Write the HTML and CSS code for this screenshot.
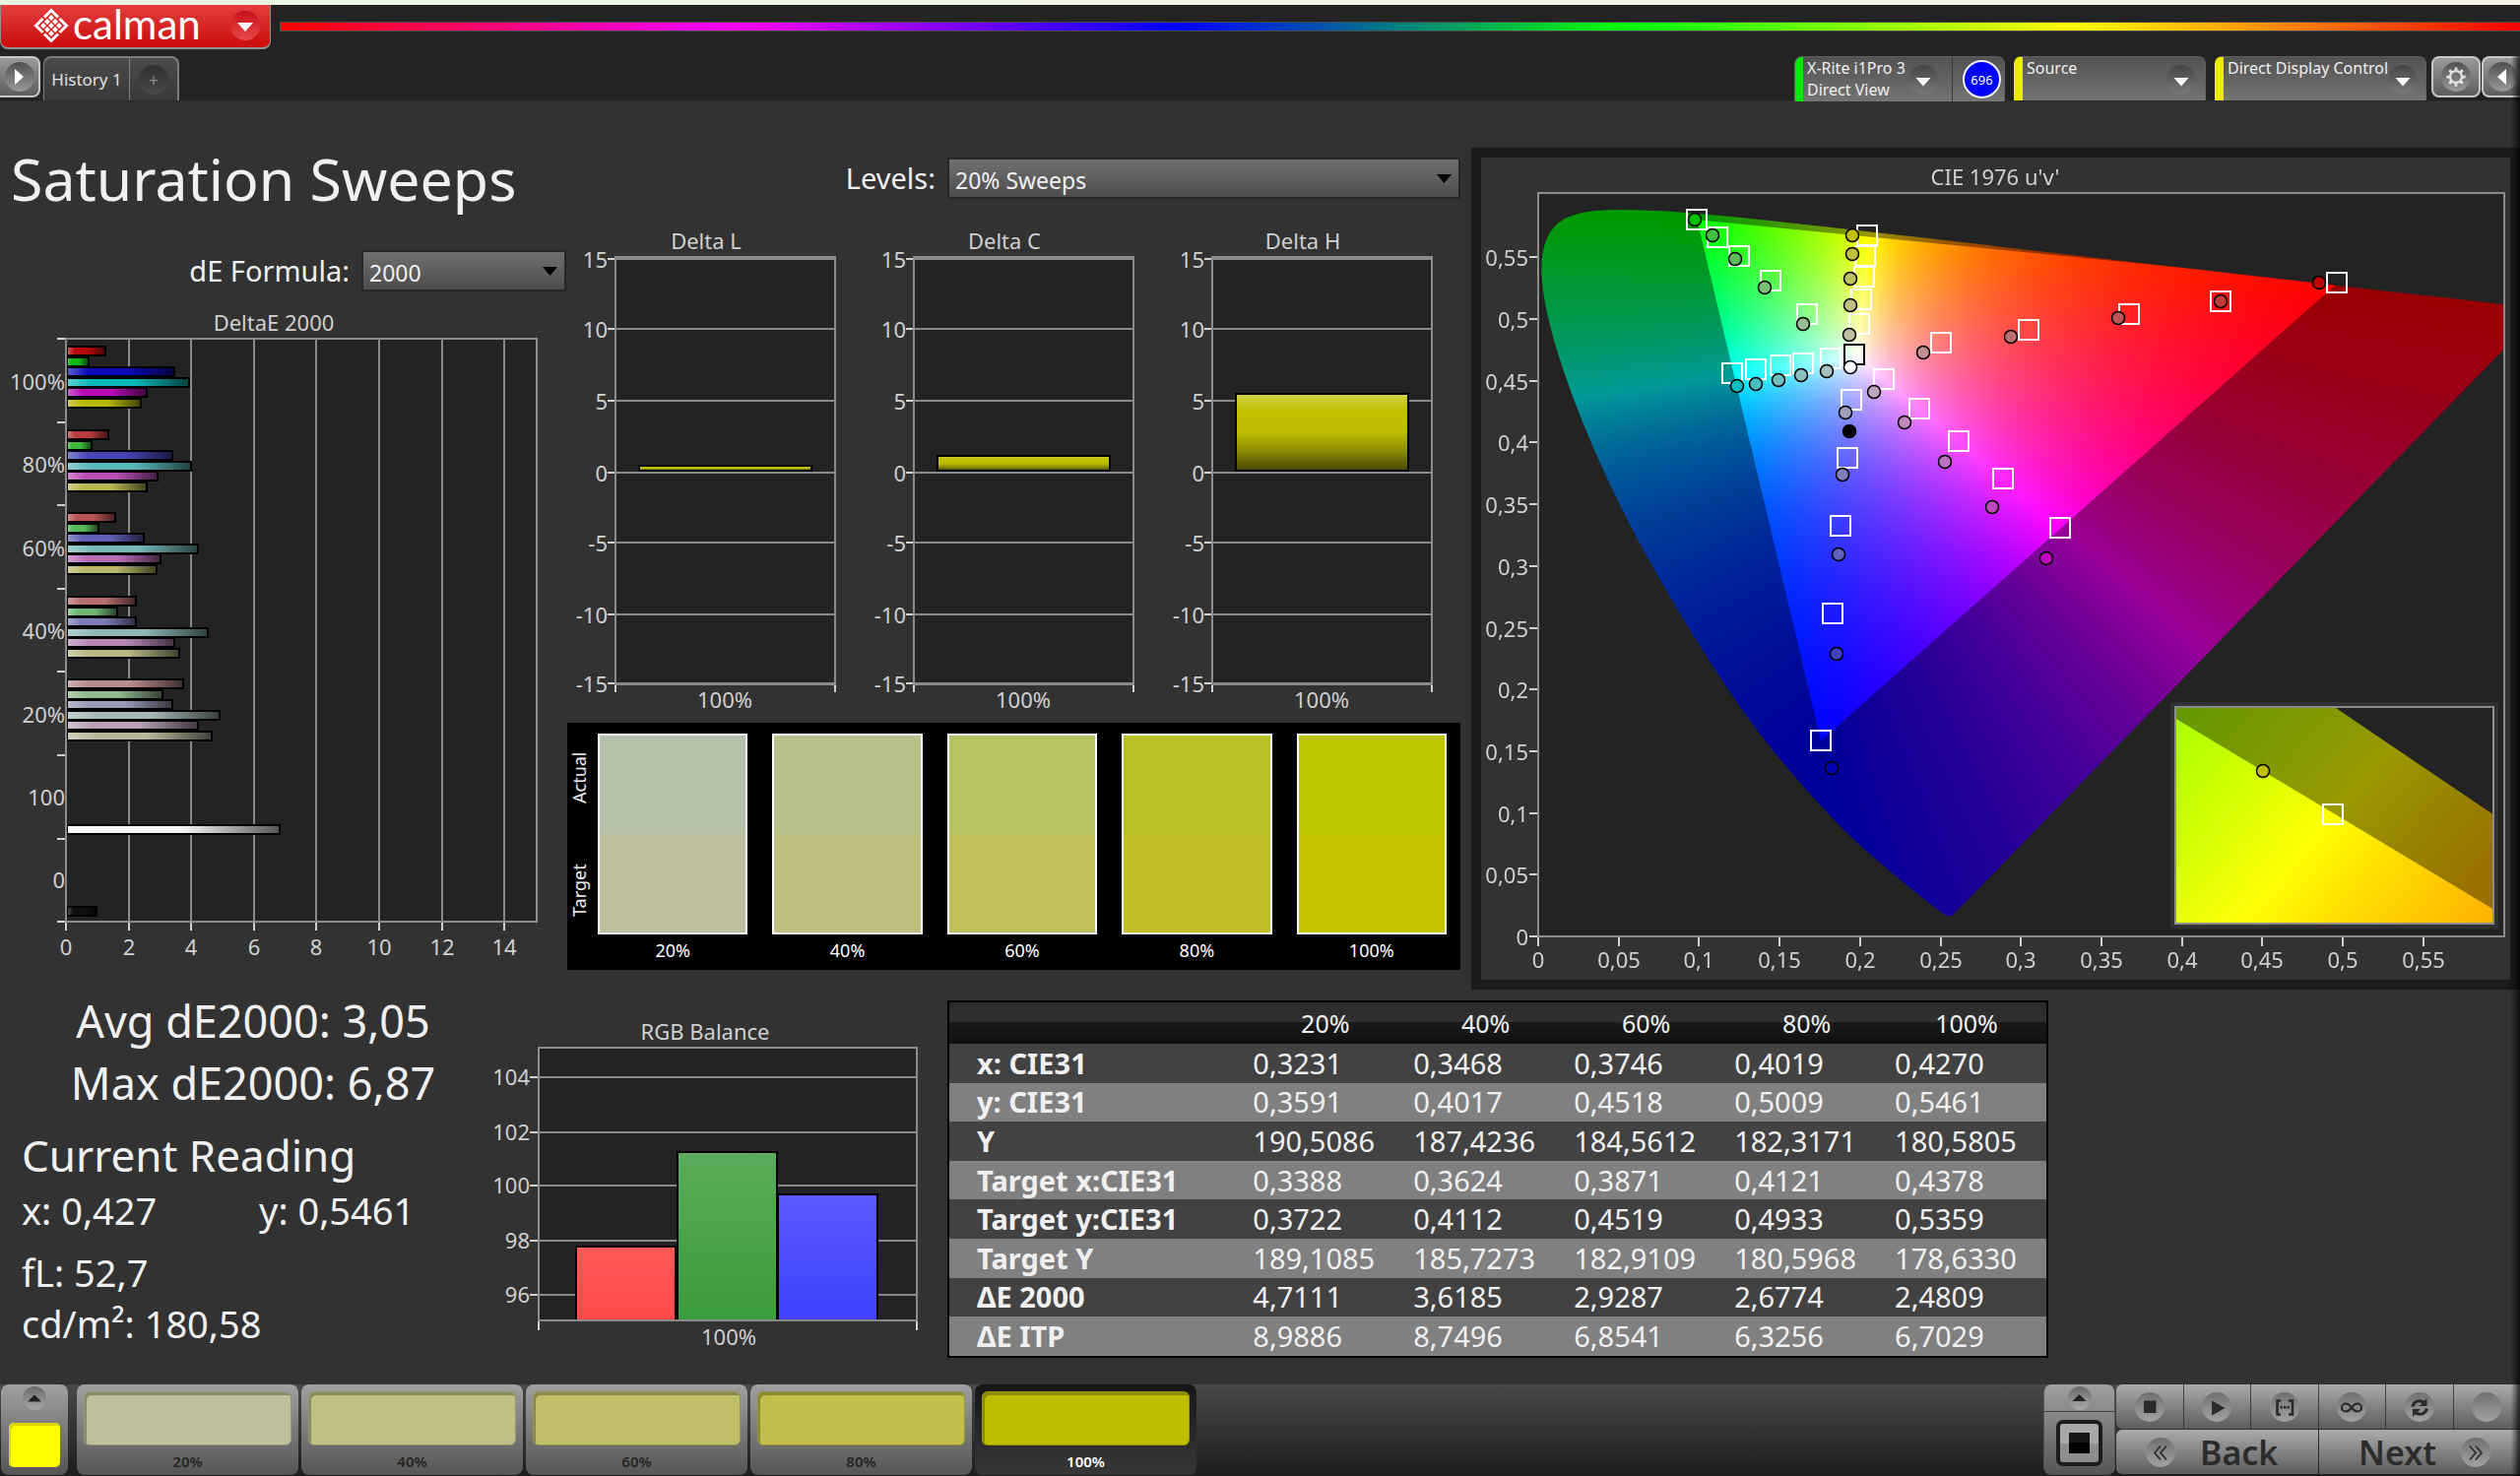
FILE: index.html
```html
<!DOCTYPE html>
<html lang="en">
<head>
<meta charset="utf-8">
<title>Calman - Saturation Sweeps</title>
<link rel="stylesheet" href="styles.css">
</head>
<body>
<header class="header">
  <div class="brand-row">
    <button class="brand" type="button">
      <svg class="brand-mark" viewBox="0 0 36 36" aria-hidden="true">
        <g fill="none" stroke="#fff" stroke-width="3">
          <path d="M11 9.500L18 2.500L25 9.500M26.500 11L33.500 18L26.500 25M25 26.500L18 33.500L11 26.500M9.500 25L2.500 18L9.500 11"/>
        </g>
        <g fill="#fff">
          <path d="M18 7l3 3-3 3-3-3zM14 11l3 3-3 3-3-3zM22 11l3 3-3 3-3-3zM10 15l3 3-3 3-3-3zM18 15l3 3-3 3-3-3zM26 15l3 3-3 3-3-3zM14 19l3 3-3 3-3-3zM22 19l3 3-3 3-3-3zM18 23l3 3-3 3-3-3z"/>
        </g>
      </svg>
      <span class="brand-name">calman</span>
      <span class="disc disc-red"><span class="tri-down"></span></span>
    </button>
    <div class="rainbow"></div>
  </div>
  <div class="tab-row">
    <button class="square-btn square-left" type="button" aria-label="Expand"><span class="disc"><span class="tri-right"></span></span></button>
    <div class="history">
      <button class="history-tab" type="button">History 1</button>
      <button class="history-add" type="button" aria-label="Add"><span class="disc disc-dark">+</span></button>
    </div>
    <div class="devices">
      <div class="device-group">
        <button class="device green" type="button"><span class="device-text">X-Rite i1Pro 3<br>Direct View</span><span class="disc disc-mid"><span class="tri-down"></span></span></button>
        <span class="counter"><span class="counter-disc">696</span></span>
      </div>
      <button class="device yellow source" type="button"><span class="device-text">Source</span><span class="disc disc-mid"><span class="tri-down"></span></span></button>
      <button class="device yellow display" type="button"><span class="device-text">Direct Display Control</span><span class="disc disc-mid"><span class="tri-down"></span></span></button>
      <button class="square-btn gear" type="button" aria-label="Settings"><span class="disc">
        <svg viewBox="0 0 24 24" width="22" height="22" aria-hidden="true"><circle cx="12" cy="12" r="6.500" fill="none" stroke="#e4e4e4" stroke-width="2.500"/><g stroke="#e4e4e4" stroke-width="3"><path d="M12 1.500v4M12 18.500v4M1.500 12h4M18.500 12h4M4.600 4.600l2.800 2.800M16.600 16.600l2.800 2.800M4.600 19.400l2.800-2.800M16.600 7.400l2.800-2.800"/></g></svg>
      </span></button>
      <button class="square-btn square-right" type="button" aria-label="Collapse"><span class="disc"><span class="tri-left"></span></span></button>
    </div>
  </div>
</header>

<main class="main">
  <section class="upper">
    <div class="col-error">
      <h1>Saturation Sweeps</h1>
      <div class="field formula">
        <label for="formula">dE Formula:</label>
        <span class="select"><select id="formula"><option>2000</option></select></span>
      </div>
      <svg class="chart" id="delta-e" viewBox="0 0 576 689"></svg>
    </div>
    <div class="col-delta">
      <div class="field levels">
        <label for="levels">Levels:</label>
        <span class="select"><select id="levels"><option>20% Sweeps</option></select></span>
      </div>
      <svg class="chart" id="delta-lch" viewBox="0 0 907 532"></svg>
      <div class="swatches">
        <div class="swatch-axis"><span>Actual</span><span>Target</span></div>
        <figure class="swatch s20"><div class="patch"></div><figcaption>20%</figcaption></figure>
        <figure class="swatch s40"><div class="patch"></div><figcaption>40%</figcaption></figure>
        <figure class="swatch s60"><div class="patch"></div><figcaption>60%</figcaption></figure>
        <figure class="swatch s80"><div class="patch"></div><figcaption>80%</figcaption></figure>
        <figure class="swatch s100"><div class="patch"></div><figcaption>100%</figcaption></figure>
      </div>
    </div>
    <div class="cie">
      <canvas id="cie-fill" width="1045" height="835"></canvas>
      <svg id="cie-plot" viewBox="0 0 1045 835"></svg>
    </div>
  </section>

  <section class="lower">
    <div class="readings">
      <div class="summary">
        <p>Avg dE2000: 3,05</p>
        <p>Max dE2000: 6,87</p>
      </div>
      <h2>Current Reading</h2>
      <div class="reading xy"><span>x: 0,427</span><span>y: 0,5461</span></div>
      <div class="reading fl">fL: 52,7</div>
      <div class="reading">cd/m²: 180,58</div>
    </div>
    <svg class="chart" id="rgb" viewBox="0 0 448 372"></svg>
    <table class="data">
      <thead><tr><th></th><th>20%</th><th>40%</th><th>60%</th><th>80%</th><th>100%</th></tr></thead>
      <tbody>
        <tr><th>x: CIE31</th><td>0,3231</td><td>0,3468</td><td>0,3746</td><td>0,4019</td><td>0,4270</td></tr>
        <tr><th>y: CIE31</th><td>0,3591</td><td>0,4017</td><td>0,4518</td><td>0,5009</td><td>0,5461</td></tr>
        <tr><th>Y</th><td>190,5086</td><td>187,4236</td><td>184,5612</td><td>182,3171</td><td>180,5805</td></tr>
        <tr><th>Target x:CIE31</th><td>0,3388</td><td>0,3624</td><td>0,3871</td><td>0,4121</td><td>0,4378</td></tr>
        <tr><th>Target y:CIE31</th><td>0,3722</td><td>0,4112</td><td>0,4519</td><td>0,4933</td><td>0,5359</td></tr>
        <tr><th>Target Y</th><td>189,1085</td><td>185,7273</td><td>182,9109</td><td>180,5968</td><td>178,6330</td></tr>
        <tr><th>ΔE 2000</th><td>4,7111</td><td>3,6185</td><td>2,9287</td><td>2,6774</td><td>2,4809</td></tr>
        <tr><th>ΔE ITP</th><td>8,9886</td><td>8,7496</td><td>6,8541</td><td>6,3256</td><td>6,7029</td></tr>
      </tbody>
    </table>
  </section>
</main>

<footer class="footer">
  <button class="current" type="button" aria-label="Current pattern"><span class="disc disc-small"><span class="tri-up"></span></span><span class="current-color"></span></button>
  <div class="levels-bar">
    <button class="level s20" type="button"><span class="level-color"></span>20%</button>
    <button class="level s40" type="button"><span class="level-color"></span>40%</button>
    <button class="level s60" type="button"><span class="level-color"></span>60%</button>
    <button class="level s80" type="button"><span class="level-color"></span>80%</button>
    <button class="level s100 active" type="button"><span class="level-color"></span>100%</button>
  </div>
  <button class="window-btn" type="button" aria-label="Pattern window"><span class="window-top"><span class="disc disc-small"><span class="tri-up"></span></span></span><span class="window-icon"><span></span></span></button>
  <div class="transport">
    <div class="transport-row">
      <button type="button" aria-label="Stop"><span class="knob"><svg viewBox="0 0 30 30"><path d="M9 8.500h12.500V21H9z" fill="#2a2a2a"/></svg></span></button>
      <button type="button" aria-label="Play"><span class="knob"><svg viewBox="0 0 30 30"><path d="M10 8.500L23.500 16L10 23.500z" fill="#2a2a2a"/></svg></span></button>
      <button type="button" aria-label="Range"><span class="knob"><svg viewBox="0 0 30 30"><path d="M11 8.500H7.500V22.500H11M19 8.500h4V22.500h-4" fill="none" stroke="#2a2a2a" stroke-width="2.600"/><path d="M10.500 14h2.500v2.500h-2.500zM14 14h2.500v2.500H14zM17.500 14H20v2.500h-2.500z" fill="#2a2a2a"/></svg></span></button>
      <button type="button" aria-label="Continuous"><span class="knob"><svg viewBox="0 0 30 30"><path d="M15 15.500C12.500 12 10.500 11.500 9 11.500a4 4 0 0 0 0 8c1.500 0 3.500-.5 6-4s4.500-4 6-4a4 4 0 0 1 0 8c-1.500 0-3.500-.5-6-4z" fill="none" stroke="#2a2a2a" stroke-width="2.200"/></svg></span></button>
      <button type="button" aria-label="Repeat"><span class="knob"><svg viewBox="0 0 30 30"><path d="M8 14.500C9 9 15 7 20 10.500M22.500 16.500C21 22 15 24 10.500 20.500" fill="none" stroke="#2a2a2a" stroke-width="3"/><path d="M22.500 6v8h-8zM8 25v-8h8z" fill="#2a2a2a"/></svg></span></button>
      <button type="button" aria-label="Blank"><span class="knob"></span></button>
    </div>
    <div class="nav-row">
      <button class="back" type="button"><span class="knob"><svg viewBox="0 0 30 30"><path d="M15 8.500L9 15.500L15 22.500M21 8.500L15 15.500L21 22.500" fill="none" stroke="#2e2e2e" stroke-width="1.800"/></svg></span><span>Back</span></button>
      <button class="next" type="button"><span>Next</span><span class="knob"><svg viewBox="0 0 30 30"><path d="M9 8.500L15 15.500L9 22.500M15 8.500L21 15.500L15 22.500" fill="none" stroke="#2e2e2e" stroke-width="1.800"/></svg></span></button>
    </div>
  </div>
</footer>
<script src="charts.js"></script>
</body>
</html>
```
FILE: styles.css
```css
* { box-sizing: border-box; }

body {
  margin: 0;
  min-height: 100vh;
  display: flex;
  flex-direction: column;
  background: #323232;
  color: #f0f0f0;
  font-family: "Noto Sans", "Open Sans", sans-serif;
  position: relative;
}

body::after {
  content: "";
  position: absolute;
  inset: 57px 0 0 auto;
  width: 9px;
  background: linear-gradient(90deg, rgba(0, 0, 0, 0), rgba(0, 0, 0, .75));
  pointer-events: none;
}

h1, h2, p, figure { margin: 0; font-weight: 400; }
button { font: inherit; color: inherit; border: 0; padding: 0; background: none; }

/* header */
.header {
  background: #232323;
  border-bottom: 1px solid #2a2a2a;
}
.header::before {
  content: "";
  display: block;
  height: 5px;
  background: linear-gradient(90deg, #e9f8e0, #f5f3e0);
}
.brand-row { display: flex; align-items: flex-start; gap: 10px; height: 44px; }
.brand {
  display: flex;
  align-items: center;
  width: 275px;
  height: 45px;
  padding: 0 10px 2px 33px;
  border: 1px solid #909090;
  border-top: 0;
  border-bottom-width: 2px;
  border-radius: 0 0 8px 8px;
  background: linear-gradient(#e23e3e, #cb0c0c);
}
.brand-mark { width: 36px; height: 36px; }
.brand-name {
  flex: 1;
  margin-left: 4px;
  padding-bottom: 4px;
  text-align: left;
  font: 400 42px/40px Lato, sans-serif;
  color: #fff;
}
.rainbow {
  flex: 1;
  height: 8px;
  margin-top: 18px;
  box-shadow: 0 0 0 1px #4a4a4a;
  background: linear-gradient(90deg, #f00, #f0f 20%, #00f 40%, #0f0 60%, #ff0 80%, #f00);
}

.disc {
  display: flex;
  flex: none;
  align-items: center;
  justify-content: center;
  width: 30px;
  height: 30px;
  border-radius: 50%;
  background: linear-gradient(#505050, #9a9a9a);
}
.disc-red { background: linear-gradient(#c8101a, #ea4a4a); }
.disc-dark { background: linear-gradient(#303030, #4a4a4a); color: #8a8a8a; font-size: 18px; }
.disc-mid { background: linear-gradient(#454545, #7a7a7a); }
.disc-small { width: 24px; height: 24px; background: linear-gradient(#6a6a6a, #a8a8a8); }
.tri-down, .tri-up, .tri-left, .tri-right { background: #fff; }
.tri-down { width: 16px; height: 9px; margin-top: 4px; clip-path: polygon(0 0, 100% 0, 50% 100%); }
.tri-up { width: 14px; height: 7px; background: #222; clip-path: polygon(50% 0, 100% 100%, 0 100%); }
.tri-right { width: 9px; height: 16px; clip-path: polygon(0 0, 100% 50%, 0 100%); }
.tri-left { width: 9px; height: 16px; clip-path: polygon(100% 0, 100% 100%, 0 50%); }

.tab-row { display: flex; align-items: flex-start; margin-top: 8px; height: 45px; }
.square-btn {
  display: flex;
  align-items: center;
  justify-content: center;
  height: 42px;
  border: 2px solid #c8c8c8;
  border-radius: 8px;
  background: linear-gradient(#9a9a9a, #5c5c5c);
}
.square-left { width: 41px; border-left: 0; border-radius: 0 8px 8px 0; }
.square-right { width: 39px; border-right: 0; border-radius: 8px 0 0 8px; }
.gear { width: 50px; margin-left: 5px; margin-right: 1px; }
.history {
  display: flex;
  height: 45px;
  margin-left: 3px;
  border: 1px solid #7c7c7c;
  border-width: 2px 2px 0 1px;
  border-radius: 8px 8px 0 0;
  background: linear-gradient(#4c4c4c, #383838);
}
.history-tab { width: 87px; border-right: 1px solid #808080; font-size: 17px; color: #e0e0e0; }
.history-add { display: flex; align-items: center; justify-content: center; width: 48px; }

.devices { display: flex; margin-left: auto; }
.device-group, .source, .display {
  border: 1px solid #606060;
  border-width: 1px 1px 0;
  border-radius: 8px 8px 0 0;
  background: linear-gradient(#525252, #747474);
  overflow: hidden;
}
.device-group { display: flex; width: 214px; }
.device {
  display: flex;
  justify-content: space-between;
  height: 45px;
  padding: 0 9px 0 5px;
  border-left: 8px solid;
  text-align: left;
}
.device.green { flex: 1; border-left-color: #00ea00; border-right: 1px solid #3a3a3a; padding: 0 14px 0 4px; }
.device.yellow { border-left: 9px solid #ecec00; margin-left: 9px; padding-left: 4px; }
.device .disc { margin-top: 8px; }
.source { width: 195px; }
.display { width: 215px; }
.device-text { font-size: 16px; line-height: 22px; white-space: nowrap; }
.counter { display: flex; align-items: center; justify-content: flex-end; width: 52px; padding-right: 3px; }
.counter-disc {
  display: flex;
  align-items: center;
  justify-content: center;
  width: 39px;
  height: 39px;
  border: 2px solid #f0f0ff;
  border-radius: 50%;
  background: #00f;
  color: #fff;
  font-size: 13px;
}

/* main */
.main { flex: 1; }
.upper { display: grid; grid-template-columns: minmax(0, 576fr) minmax(0, 918fr) minmax(0, 1065fr); }
.col-error { padding-top: 42px; }
h1 { padding-left: 11px; font-size: 59px; line-height: 72px; white-space: nowrap; }
.field { display: flex; align-items: center; justify-content: flex-end; gap: 12px; font-size: 29px; line-height: 42px; }
.formula { margin-top: 37px; padding-right: 1px; }
.select { position: relative; display: block; height: 42px; }
.select::after {
  content: "";
  position: absolute;
  right: 9px;
  top: 17px;
  width: 15px;
  height: 9px;
  background: #000;
  clip-path: polygon(0 0, 100% 0, 50% 100%);
  pointer-events: none;
}
.formula .select { width: 208px; }
.levels .select { flex: 0 0 521px; }
select {
  appearance: none;
  display: block;
  width: 100%;
  height: 100%;
  padding: 3px 6px 0;
  border: 2px solid #272727;
  border-radius: 0;
  background: linear-gradient(#707070, #4c4c4c);
  color: #f0f0f0;
  font: 23px "Noto Sans", sans-serif;
}
.chart { display: block; width: 100%; height: auto; overflow: visible; }
svg text { fill: #d0d0d0; font-size: 22px; }

.col-delta { padding: 57px 11px 0 0; }
.swatches {
  display: grid;
  grid-template-columns: 6px repeat(5, minmax(0, 1fr));
  column-gap: 25px;
  padding: 11px 14px 0 0;
  height: 251px;
  background: #000;
}
.swatch-axis {
  writing-mode: vertical-rl;
  transform: rotate(180deg);
  display: flex;
  flex-direction: row-reverse;
  justify-content: space-between;
  width: 24px;
  height: 204px;
  padding: 18px 0;
  font-size: 18px;
  line-height: 24px;
}
.patch {
  height: 204px;
  border: 2px solid #fff;
  background: linear-gradient(var(--actual) 50%, var(--target) 50%);
}
.swatch figcaption { font-size: 18px; line-height: 32px; text-align: center; color: #fff; }
.s20 { --actual: #b7c2aa; --target: #bfbf9e; }
.s40 { --actual: #b6c28a; --target: #bfbf80; }
.s60 { --actual: #b7c263; --target: #bfbf5c; }
.s80 { --actual: #b6c228; --target: #bfbf2a; }
.s100 { --actual: #bbc500; --target: #c5c200; }

.cie { display: grid; margin-top: 47px; border: 10px solid #1a1a1a; align-self: start; }
.cie canvas, .cie svg { grid-area: 1 / 1; display: block; width: 100%; height: auto; }

.lower { display: grid; grid-template-columns: minmax(0, 514fr) minmax(0, 448fr) minmax(0, 1118fr) minmax(0, 479fr); align-items: start; }
.readings { padding-bottom: 30px; white-space: nowrap; }
.summary { text-align: center; font-size: 45px; line-height: 63px; }
h2 { margin-top: 12px; padding-left: 22px; font-size: 44px; line-height: 60px; }
.reading { padding-left: 22px; font-size: 38px; line-height: 52px; }
.xy { display: grid; grid-template-columns: 241px 1fr; }
.fl { margin-top: 11px; }

.data {
  width: 100%;
  height: 363px;
  margin-top: 11px;
  border: 2px solid #000;
  border-collapse: collapse;
  table-layout: fixed;
  background: #424242;
  font-size: 29px;
  line-height: 36px;
  white-space: nowrap;
}
.data th, .data td { padding: 0 0 0 8px; text-align: left; font-weight: 400; }
.data thead tr { height: 43px; background: linear-gradient(#2a2a2a, #303030 49%, #1a1a1a 50%, #101010); }
.data thead th { padding: 0; text-align: center; font-size: 25px; }
.data th:first-child { width: 27%; padding-left: 28px; text-align: left; font-weight: 700; }
.data tbody tr:nth-child(even) { background: #808080; }

/* footer */
.footer {
  display: flex;
  height: 93px;
  padding: 0 0 1px 1px;
  background: linear-gradient(#484848, #1e1e1e);
}
.current, .level, .window-btn { border-radius: 8px; background: linear-gradient(#a0a0a0, #555); }
.current {
  display: flex;
  flex-direction: column;
  align-items: center;
  justify-content: space-between;
  width: 68px;
  padding: 2px 0 8px;
}
.current-color { width: 52px; height: 45px; border-radius: 5px; background: #ff0; box-shadow: inset 2px 3px 0 #d8d800; }
.levels-bar { display: flex; gap: 3px; margin-left: 9px; }
.level {
  width: 225px;
  padding: 7px 7px 0;
  color: #242424;
  font-size: 15px;
  font-weight: 600;
  line-height: 33px;
}
.level-color {
  display: block;
  height: 55px;
  border: 1px solid rgba(0, 0, 0, .2);
  border-radius: 6px;
  background: var(--target);
  box-shadow: inset 2px 3px 0 rgba(0, 0, 0, .28);
}
.level.s80 { --target: #bfbf4a; }
.level.s60 { --target: #bfbf6a; }
.level.s40 { --target: #bfbf86; }
.level.s100 { --target: #bfbf00; }
.level.active { background: linear-gradient(#161616, #383838); color: #fff; }
.window-btn { width: 73px; margin-left: auto; border: 1px solid #555; border-top: 0; overflow: hidden; }
.window-top { display: flex; align-items: center; justify-content: center; height: 28px; border-bottom: 1px solid #404040; }
.window-icon {
  display: flex;
  align-items: center;
  justify-content: center;
  width: 47px;
  height: 47px;
  margin: 8px auto 9px;
  border: 4px solid #1c1c1c;
  border-radius: 7px;
  background: linear-gradient(#a8a8a8 50%, #8e8e8e 50%);
}
.window-icon span { width: 21px; height: 21px; background: linear-gradient(#161616 50%, #000 50%); }
.transport { display: grid; grid-template-rows: 45px 45px; row-gap: 1px; width: 410px; margin-left: 1px; }
.transport-row { display: grid; grid-template-columns: repeat(6, 1fr); gap: 1px; }
.nav-row { display: grid; grid-template-columns: 1fr 1fr; gap: 1px; }
.transport button {
  display: flex;
  align-items: center;
  justify-content: center;
  background: linear-gradient(#ababab, #5c5c5c);
}
.transport button:first-child { border-radius: 6px 0 0 6px; }
.nav-row button { gap: 25px; padding: 0 30px; font-size: 34px; font-weight: 600; line-height: 44px; color: #2c2c2c; }
.nav-row .back { justify-content: flex-start; }
.nav-row .next { justify-content: flex-end; }
.knob { width: 30px; height: 30px; border-radius: 50%; background: linear-gradient(#707070, #a2a2a2); }
.knob svg { display: block; width: 30px; height: 30px; }
```
FILE: charts.js
```js
const NS = 'http://www.w3.org/2000/svg';

function add(parent, name, attrs, text) {
  const el = document.createElementNS(NS, name);
  for (const key in attrs) el.setAttribute(key, attrs[key]);
  if (text !== undefined) el.textContent = text;
  parent.appendChild(el);
  return el;
}
function line(svg, x1, y1, x2, y2, stroke = '#8a8a8a', width = 2) {
  add(svg, 'line', { x1, y1, x2, y2, stroke, 'stroke-width': width });
}
function label(svg, x, y, text, anchor = 'middle') {
  add(svg, 'text', { x, y, 'text-anchor': anchor }, text);
}
function frame(svg, x, y, w, h, fill = '#232323') {
  add(svg, 'rect', { x, y, width: w, height: h, fill, stroke: '#8c8c8c', 'stroke-width': 2 });
}
function gradient(svg, id, stops, vertical) {
  const g = add(svg, 'linearGradient', { id, x1: 0, y1: 0, x2: vertical ? 0 : 1, y2: vertical ? 1 : 0 });
  stops.forEach(([offset, color]) => add(g, 'stop', { offset, 'stop-color': color }));
}
function mix(hex, target, t) {
  const n = parseInt(hex.slice(1), 16);
  const c = [n >> 16, (n >> 8) & 255, n & 255].map(v => Math.round(v + (target - v) * t));
  return `rgb(${c})`;
}

/* DeltaE per colour and saturation */
(function () {
  const svg = document.getElementById('delta-e');
  const left = 67, top = 48, bottom = 640;
  label(svg, 278, 40, 'DeltaE 2000');
  frame(svg, left, top, 478, bottom - top);
  for (let i = 0; i < 8; i++) {
    const x = Math.round(left + i * 63.6);
    line(svg, x, top, x, bottom);
    line(svg, x, bottom + 1, x, bottom + 9, '#d0d0d0');
    label(svg, x, 674, String(i * 2));
    const y = Math.round(top + i * 84.6);
    line(svg, 58, y, 66, y, '#d0d0d0');
  }
  ['100%', '80%', '60%', '40%', '20%', '100', '0'].forEach((t, i) => label(svg, 66, Math.round(100 + i * 84.4), t, 'end'));
  const groups = [
    [61, ['#b80a0a', 108], ['#10b810', 91], ['#0a0ab8', 178], ['#0ab8b8', 193], ['#b80ab8', 150], ['#b8b80a', 144]],
    [146, ['#b83c3c', 111], ['#3cb83c', 94], ['#4646b8', 176], ['#56b8b8', 195], ['#b850b8', 161], ['#b8b850', 150]],
    [230, ['#b85454', 118], ['#56b856', 101], ['#6060b8', 147], ['#74b8b8', 202], ['#b86cb8', 164], ['#b8b868', 160]],
    [315, ['#b86e6e', 139], ['#72b872', 120], ['#7c7cb8', 139], ['#8cb8b8', 212], ['#b888b8', 178], ['#b8b884', 183]],
    [399, ['#b88a8a', 187], ['#90b890', 166], ['#9a9ab8', 176], ['#a4b8b8', 224], ['#b8a0b8', 202], ['#b8b89c', 216]],
    [547, ['#f4f4f4', 285]],
    [630, ['#101010', 99]]
  ];
  groups.forEach(([y, ...bars], g) => bars.forEach(([color, end], i) => {
    const id = `bar${g}${i}`;
    gradient(svg, id, [[0, mix(color, 255, g === 6 ? .3 : .35)], [.2, color], [.55, color], [1, mix(color, 0, .65)]]);
    add(svg, 'rect', { x: left + 1, y: Math.round(y - 5 + i * 10.5), width: end - left - 2, height: 9, fill: `url(#${id})`, stroke: '#000', 'stroke-width': 2 });
  }));
  line(svg, left, top, left, bottom);
})();

/* Delta L, C and H */
(function () {
  const svg = document.getElementById('delta-lch');
  gradient(svg, 'yellow', [[0, '#d2d24a'], [.22, '#c0c000'], [.5, '#bcbc00'], [.75, '#8a8a08'], [1, '#454500']], true);
  [['Delta L', 271], ['Delta C', 261], ['Delta H', 198]].forEach(([name, barTop], i) => {
    const x = 49 + i * 303;
    label(svg, x + 92, 51, name);
    frame(svg, x, 59, 223, 434);
    [61, 132, 205, 278, 349, 422, 492].forEach((y, k) => {
      line(svg, x, y, x + 223, y);
      line(svg, x - 8, y, x - 1, y, '#d0d0d0');
      label(svg, x - 8, y + 9, String(15 - k * 5), 'end');
    });
    line(svg, x, 494, x, 501, '#d0d0d0');
    line(svg, x + 223, 494, x + 223, 501, '#d0d0d0');
    label(svg, x + 111, 517, '100%');
    add(svg, 'rect', { x: x + 24, y: barTop, width: 175, height: 276 - barTop, fill: 'url(#yellow)', stroke: '#000', 'stroke-width': 2 });
  });
})();

/* RGB balance */
(function () {
  const svg = document.getElementById('rgb');
  label(svg, 202, 51, 'RGB Balance');
  frame(svg, 33, 59, 384, 277);
  [89, 145, 199, 255, 310].forEach((y, i) => {
    line(svg, 33, y, 417, y);
    line(svg, 24, y, 32, y, '#d0d0d0');
    label(svg, 24, y + 8, String(104 - i * 2), 'end');
  });
  [['r', 71, 261, '#ff5a5a', '#ff4848'], ['g', 174, 165, '#5aac5a', '#3a9c3a'], ['b', 276, 208, '#5a5aff', '#4040ff']].forEach(([id, x, y, a, b]) => {
    gradient(svg, 'rgb-' + id, [[0, a], [1, b]], true);
    add(svg, 'rect', { x, y, width: 101, height: 336 - y, fill: `url(#rgb-${id})`, stroke: '#000', 'stroke-width': 2 });
  });
  line(svg, 32, 336, 418, 336);
  line(svg, 33, 337, 33, 346, '#d0d0d0');
  line(svg, 417, 337, 417, 346, '#d0d0d0');
  label(svg, 226, 361, '100%');
})();

/* Chromaticity fill */
const LOCUS = [
  [.1741, .005], [.1733, .0048], [.1714, .0051], [.1644, .0109], [.1566, .0177], [.144, .0297], [.1241, .0578],
  [.1096, .0868], [.0913, .1327], [.0687, .2007], [.0454, .295], [.0235, .4127], [.0082, .5384], [.0039, .6548],
  [.0139, .7502], [.0389, .812], [.0743, .8338], [.1142, .8262], [.1547, .8059], [.2296, .7543], [.3016, .6923],
  [.3731, .6245], [.4441, .5547], [.5125, .4866], [.5752, .4242], [.627, .3725], [.6658, .334], [.6915, .3083],
  [.719, .2809], [.7347, .2653]
].map(([x, y]) => [4 * x / (-2 * x + 12 * y + 3), 9 * y / (-2 * x + 12 * y + 3)]);
const P3 = [[.496, .5275], [.0986, .5785], [.1754, .158]];

function colorAt(u, v) {
  if (v < .001) v = .001;
  const X = 9 * u / (4 * v), Z = (12 - 3 * u - 20 * v) / (4 * v);
  const c = [
    2.4935 * X - .9314 - .4027 * Z,
    -.8295 * X + 1.7627 + .0236 * Z,
    .0358 * X - .0762 + .9569 * Z
  ].map(n => Math.max(0, n));
  const m = Math.max(c[0], c[1], c[2]) || 1;
  return c.map(n => 255 * n / m);
}

function fillRegion(ctx, x0, y0, w, h, toU, toV, outline, gamut) {
  const layer = document.createElement('canvas');
  layer.width = w;
  layer.height = h;
  const c = layer.getContext('2d');
  const img = c.createImageData(w, h);
  for (let y = 0, p = 0; y < h; y++) {
    for (let x = 0; x < w; x++, p += 4) {
      const rgb = colorAt(toU(x, y), toV(y));
      img.data[p] = rgb[0];
      img.data[p + 1] = rgb[1];
      img.data[p + 2] = rgb[2];
      img.data[p + 3] = 255;
    }
  }
  c.putImageData(img, 0, 0);
  const trace = pts => {
    pts.forEach(([x, y], i) => i ? c.lineTo(x, y) : c.moveTo(x, y));
    c.closePath();
  };
  c.beginPath();
  c.rect(0, 0, w, h);
  trace(gamut);
  c.fillStyle = 'rgba(0,0,0,.4)';
  c.fill('evenodd');
  c.globalCompositeOperation = 'destination-in';
  c.fillStyle = '#000';
  c.beginPath();
  outline(c, trace);
  c.fill();
  ctx.drawImage(layer, x0, y0);
}

(function () {
  const ctx = document.getElementById('cie-fill').getContext('2d');
  ctx.fillStyle = '#323232';
  ctx.fillRect(0, 0, 1045, 835);
  ctx.fillStyle = '#232323';
  ctx.fillRect(58, 36, 982, 755);
  const px = ([u, v]) => [u * 1636.7, 755 - v * 1258];
  fillRegion(ctx, 58, 36, 982, 755, x => x / 1636.7, y => (755 - y) / 1258, (c) => {
    const pts = LOCUS.map(px);
    c.moveTo(...pts[0]);
    for (let i = 1; i < pts.length - 1; i++) {
      const [x, y] = pts[i], [nx, ny] = pts[i + 1];
      c.quadraticCurveTo(x, y, (x + nx) / 2, (y + ny) / 2);
    }
    c.lineTo(...pts[pts.length - 1]);
    c.closePath();
  }, P3.map(px));

  /* zoomed view round the selected target */
  ctx.fillStyle = '#323232';
  ctx.fillRect(700, 553, 333, 230);
  ctx.fillStyle = '#232323';
  ctx.fillRect(704, 557, 325, 222);
  fillRegion(ctx, 704, 557, 325, 222,
    (x, y) => .2047 + (x - 161) / 8510 + (y - 110) / 10000,
    y => .5638 - (y - 110) / 36000,
    (c, trace) => trace([[0, 0], [161, 0], [325, 111], [325, 222], [0, 222]]),
    [[0, 12], [325, 207], [325, 222], [0, 222]]);
})();

/* Chromaticity axes and markers */
(function () {
  const svg = document.getElementById('cie-plot');
  label(svg, 522, 28, "CIE 1976 u'v'");
  frame(svg, 58, 36, 981, 755, 'none');
  for (let i = 0; i < 12; i++) {
    const text = String(i * 5 / 100).replace('.', ',');
    const x = Math.round(58 + i * 81.7), y = Math.round(791 - i * 62.7);
    line(svg, x, 792, x, 801, '#d0d0d0');
    label(svg, x, 823, text);
    line(svg, 49, y, 57, y, '#d0d0d0');
    label(svg, 48, y + 9, text, 'end');
  }
  frame(svg, 705, 558, 323, 220, 'none');

  const square = (x, y, stroke = '#fff') =>
    add(svg, 'rect', { x: x - 10, y: y - 10, width: 20, height: 20, fill: 'none', stroke, 'stroke-width': 2 });
  const dot = (x, y, fill) => add(svg, 'circle', { cx: x, cy: y, r: 6.5, fill, stroke: '#000', 'stroke-width': 1.5 });

  const targets = [
    [161, 27], [182, 45], [204, 64], [236, 89], [273, 123],
    [334, 43], [332, 64], [331, 85], [328, 108], [326, 133],
    [197, 183], [221, 179], [246, 175], [269, 173], [297, 168],
    [351, 189], [387, 219], [427, 252], [472, 290], [530, 340],
    [318, 210], [314, 269], [307, 338], [299, 427], [287, 556],
    [409, 152], [498, 139], [600, 123], [693, 110], [811, 91]
  ];
  targets.forEach(([x, y]) => square(58 + x, 36 + y));
  square(379, 200, '#000');

  const measured = [
    [159, 27, '#00c000'], [177, 43, '#40c040'], [200, 67, '#5abf5a'], [230, 96, '#76bf76'], [269, 133, '#94bf94'],
    [319, 43, '#c0c000'], [319, 62, '#c0bf40'], [317, 87, '#bfbf5f'], [317, 114, '#bfbf80'], [316, 144, '#bfbfa0'],
    [317, 177, '#ffffff'],
    [202, 196, '#00bfbf'], [221, 194, '#48bfbf'], [244, 190, '#70bfbf'], [267, 185, '#8cbfbf'], [293, 181, '#a5bfbf'],
    [316, 242, '#000000'],
    [312, 223, '#9f9fbf'], [309, 286, '#8080bf'], [305, 367, '#6060bf'], [303, 468, '#4040c0'], [298, 584, '#0000b4'],
    [341, 202, '#bfa4bf'], [372, 233, '#bf88bf'], [413, 273, '#bf70bf'], [461, 319, '#bf48bf'], [516, 371, '#bf00bf'],
    [391, 162, '#bf8f8f'], [480, 146, '#bf6f6f'], [589, 127, '#bf5454'], [693, 110, '#bf3c3c'], [793, 91, '#c00000']
  ];
  measured.forEach(([x, y, fill]) => dot(58 + x, 36 + y, fill));
  square(865, 667);
  dot(794, 623, '#c0c000');
})();
```
